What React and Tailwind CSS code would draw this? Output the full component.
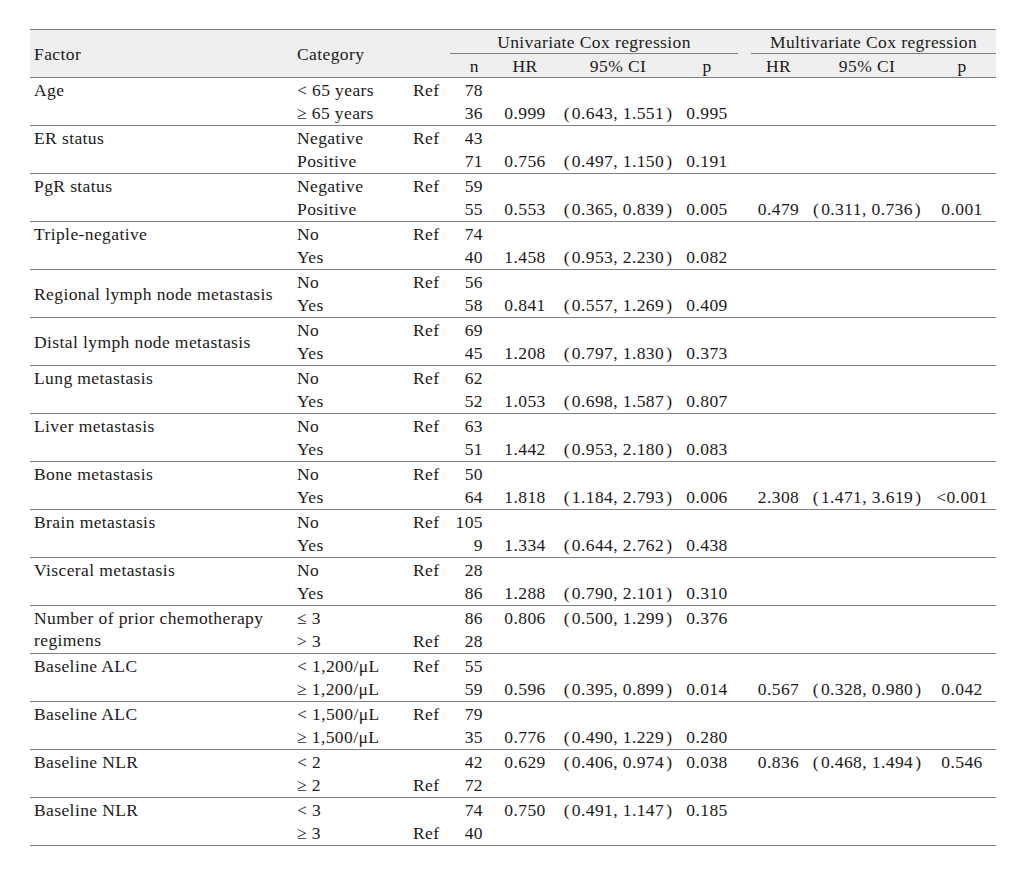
const groups = [
  { factor: "Age", rows: [
    ["< 65 years", "Ref", "78"],
    ["≥ 65 years", "", "36", "0.999", ["0.643", "1.551"], "0.995"],
  ] },
  { factor: "ER status", rows: [
    ["Negative", "Ref", "43"],
    ["Positive", "", "71", "0.756", ["0.497", "1.150"], "0.191"],
  ] },
  { factor: "PgR status", rows: [
    ["Negative", "Ref", "59"],
    ["Positive", "", "55", "0.553", ["0.365", "0.839"], "0.005", "0.479", ["0.311", "0.736"], "0.001"],
  ] },
  { factor: "Triple-negative", rows: [
    ["No", "Ref", "74"],
    ["Yes", "", "40", "1.458", ["0.953", "2.230"], "0.082"],
  ] },
  { factor: "Regional lymph node metastasis", center: true, rows: [
    ["No", "Ref", "56"],
    ["Yes", "", "58", "0.841", ["0.557", "1.269"], "0.409"],
  ] },
  { factor: "Distal lymph node metastasis", center: true, rows: [
    ["No", "Ref", "69"],
    ["Yes", "", "45", "1.208", ["0.797", "1.830"], "0.373"],
  ] },
  { factor: "Lung metastasis", rows: [
    ["No", "Ref", "62"],
    ["Yes", "", "52", "1.053", ["0.698", "1.587"], "0.807"],
  ] },
  { factor: "Liver metastasis", rows: [
    ["No", "Ref", "63"],
    ["Yes", "", "51", "1.442", ["0.953", "2.180"], "0.083"],
  ] },
  { factor: "Bone metastasis", rows: [
    ["No", "Ref", "50"],
    ["Yes", "", "64", "1.818", ["1.184", "2.793"], "0.006", "2.308", ["1.471", "3.619"], "<0.001"],
  ] },
  { factor: "Brain metastasis", rows: [
    ["No", "Ref", "105"],
    ["Yes", "", "9", "1.334", ["0.644", "2.762"], "0.438"],
  ] },
  { factor: "Visceral metastasis", rows: [
    ["No", "Ref", "28"],
    ["Yes", "", "86", "1.288", ["0.790", "2.101"], "0.310"],
  ] },
  { factor: "Number of prior chemotherapy regimens", rows: [
    ["≤ 3", "", "86", "0.806", ["0.500", "1.299"], "0.376"],
    ["> 3", "Ref", "28"],
  ] },
  { factor: "Baseline ALC", rows: [
    ["< 1,200/μL", "Ref", "55"],
    ["≥ 1,200/μL", "", "59", "0.596", ["0.395", "0.899"], "0.014", "0.567", ["0.328", "0.980"], "0.042"],
  ] },
  { factor: "Baseline ALC", rows: [
    ["< 1,500/μL", "Ref", "79"],
    ["≥ 1,500/μL", "", "35", "0.776", ["0.490", "1.229"], "0.280"],
  ] },
  { factor: "Baseline NLR", rows: [
    ["< 2", "", "42", "0.629", ["0.406", "0.974"], "0.038", "0.836", ["0.468", "1.494"], "0.546"],
    ["≥ 2", "Ref", "72"],
  ] },
  { factor: "Baseline NLR", rows: [
    ["< 3", "", "74", "0.750", ["0.491", "1.147"], "0.185"],
    ["≥ 3", "Ref", "40"],
  ] },
];

// confidence interval with the wide brackets of the printed table
const CI = ({ v }) =>
  v ? (
    <span>
      <span className="mr-[2px]">(</span>
      {v[0]}, {v[1]}
      <span className="ml-[2px]">)</span>
    </span>
  ) : null;

export default function App() {
  return (
    <div
      className="min-h-[870px] bg-white pt-[29px] pl-[30px] text-[#1a1a1a] text-[17.5px] tracking-[0.4px]"
      style={{ fontFamily: '"Liberation Serif", "Times New Roman", serif' }}
    >
      <table className="w-[966px] table-fixed border-collapse leading-[22px]">
        <colgroup>
          <col className="w-[263px]" />
          <col className="w-[116px]" />
          <col className="w-[41px]" />
          <col className="w-[40px]" />
          <col className="w-[70px]" />
          <col className="w-[116px]" />
          <col className="w-[62px]" />
          <col className="w-[13px]" />
          <col className="w-[55px]" />
          <col className="w-[122px]" />
          <col className="w-[68px]" />
        </colgroup>
        <thead className="bg-[#efefef]">
          <tr className="h-6 border-t border-[#808080]">
            <th rowSpan={2} className="pl-1 text-left font-normal">Factor</th>
            <th rowSpan={2} colSpan={2} className="pl-1 text-left font-normal">Category</th>
            <th colSpan={4} className="border-b border-[#808080] text-center font-normal">
              Univariate Cox regression
            </th>
            <th rowSpan={2} />
            <th colSpan={3} className="border-b border-[#808080] text-center font-normal">
              Multivariate Cox regression
            </th>
          </tr>
          <tr className="h-6 border-b border-[#808080]">
            <th className="text-right pr-[11px] font-normal">n</th>
            <th className="text-center font-normal">HR</th>
            <th className="text-center font-normal">95% CI</th>
            <th className="text-center font-normal">p</th>
            <th className="text-center font-normal">HR</th>
            <th className="text-center font-normal">95% CI</th>
            <th className="text-center font-normal">p</th>
          </tr>
        </thead>
        <tbody>
          {groups.map((g, gi) =>
            g.rows.map((r, ri) => (
              <tr
                key={gi + "-" + ri}
                className={ri === 1 ? "h-6 border-b border-[#808080]" : "h-6"}
              >
                {ri === 0 && (
                  <td
                    rowSpan={2}
                    className={
                      "pl-1 pr-2 " + (g.center ? "align-middle" : "align-top pt-[1px]")
                    }
                  >
                    {g.factor}
                  </td>
                )}
                <td className="pl-1 whitespace-nowrap">{r[0]}</td>
                <td className="pl-1">{r[1]}</td>
                <td className="text-right pr-[7px]">{r[2]}</td>
                <td className="text-center">{r[3]}</td>
                <td className="text-center whitespace-nowrap"><CI v={r[4]} /></td>
                <td className="text-center">{r[5]}</td>
                <td />
                <td className="text-center">{r[6]}</td>
                <td className="text-center whitespace-nowrap"><CI v={r[7]} /></td>
                <td className="text-center whitespace-nowrap">{r[8]}</td>
              </tr>
            ))
          )}
        </tbody>
      </table>
    </div>
  );
}
